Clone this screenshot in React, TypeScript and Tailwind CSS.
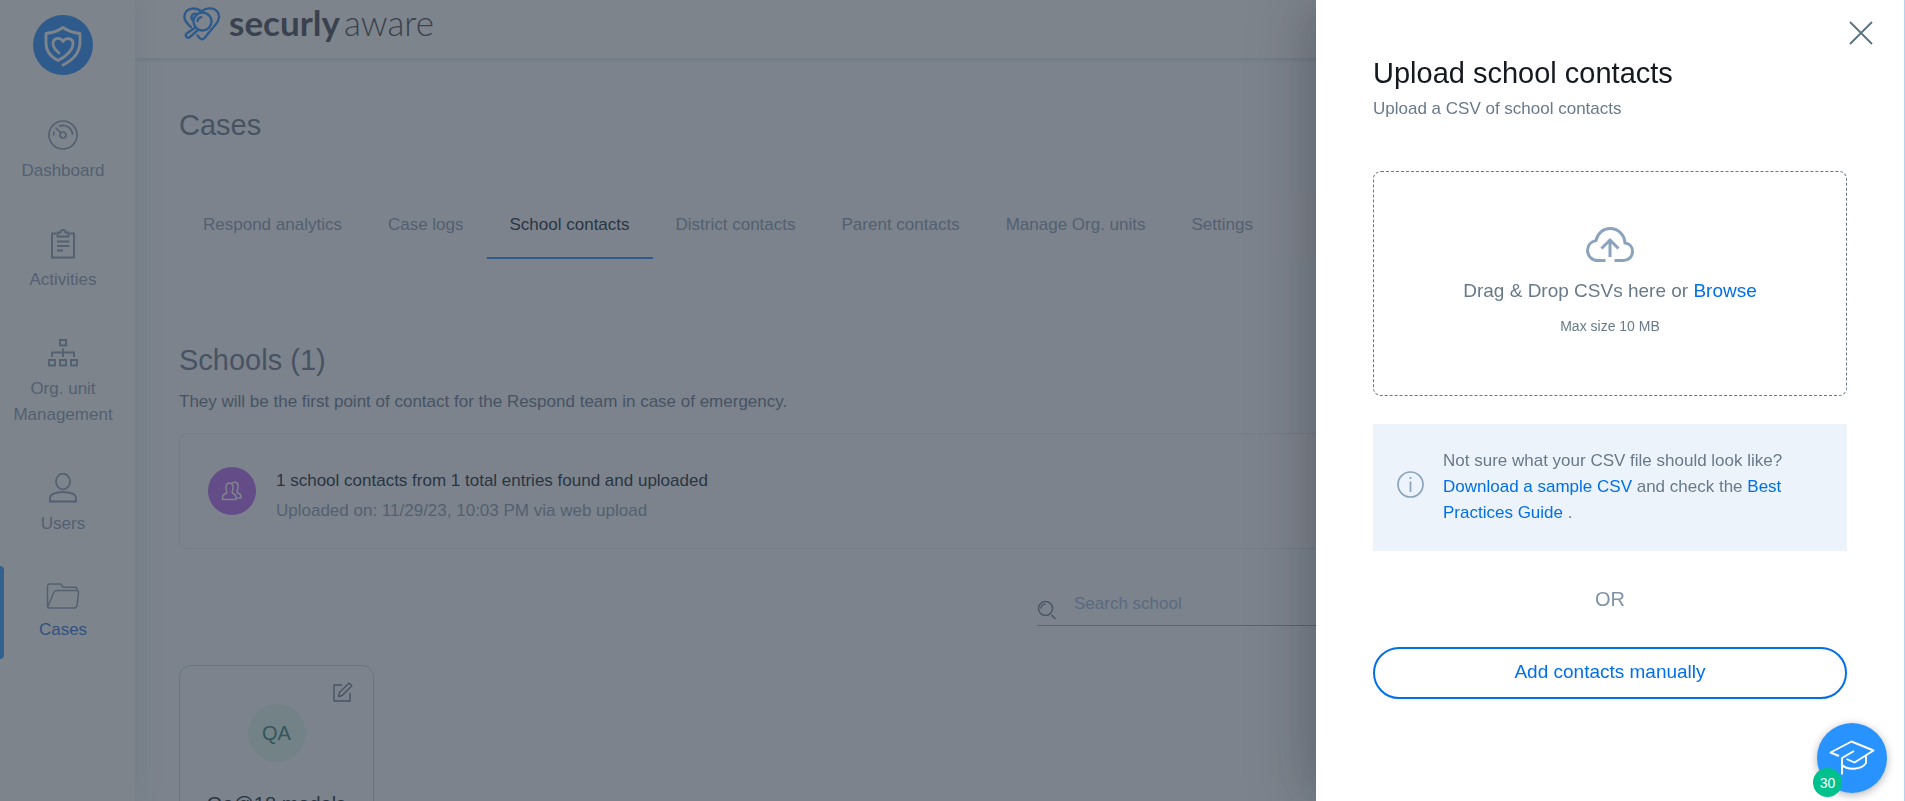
import type { ReactNode } from "react";

const DashboardIcon = () => (
  <svg width="30" height="30" viewBox="0 0 30 30" fill="none" stroke="currentColor" strokeWidth="1.700">
    <circle cx="15" cy="15" r="14" />
    <circle cx="15" cy="15" r="3" />
    <path d="M12.8 12.8 7.5 7.5M5.5 15.5c0-1.500.2-2.800.7-4M11 6.300a9.500 9.500 0 0 1 13.500 8.700M11.500 6.200c2-.8 4-.9 6-.4" />
  </svg>
);

const ActivitiesIcon = () => (
  <svg width="30" height="30" viewBox="0 0 30 30" fill="none" stroke="currentColor" strokeWidth="1.900">
    <path d="M8 4.500H4V28.500H26V4.500H22" />
    <path d="M9.500 7.500V3.500H12.500C12.500 0 17.500 0 17.500 3.500H20.500V7.500Z" />
    <path d="M9 12.500H21.500M9 17H21.500M9 21.500H15" />
  </svg>
);

const OrgUnitIcon = () => (
  <svg width="30" height="30" viewBox="0 0 30 30" fill="none" stroke="currentColor" strokeWidth="1.900">
    <path d="M12 2h6v5.500h-6zM1 22h6v5.500H1zM12 22h6v5.500h-6zM23 22h6v5.500h-6zM15 10.500V19M4 19v-4.500h22V19" />
  </svg>
);

const UsersIcon = () => (
  <svg width="30" height="30" viewBox="0 0 30 30" fill="none" stroke="currentColor" strokeWidth="1.800">
    <ellipse cx="15" cy="8.500" rx="7" ry="7.800" />
    <path d="M2 28.500V25c0-3.500 5-6 13-6s13 2.500 13 6v3.500z" />
  </svg>
);

const CasesIcon = () => (
  <svg width="34" height="27" viewBox="0 0 34 27" fill="none" stroke="currentColor" strokeWidth="1.500" strokeLinejoin="round">
    <path d="M31 8.500V7.500c0-1.500-.7-2.200-2-2.200H17L14.800 2H3.800C2.200 2 1.500 2.700 1.500 4.200V24.500c0 1 .7 1.500 1.800 1.500H28c1.800 0 2.600-.8 3-2.500l1.500-12.500c.2-1.500-.5-2.500-2-2.500H10.800c-1.500 0-2.500.6-3.200 2.200L2 24.500" />
  </svg>
);

const navItems = [
  { label: "Dashboard", icon: <DashboardIcon /> },
  { label: "Activities", icon: <ActivitiesIcon /> },
  { label: "Org. unit Management", icon: <OrgUnitIcon /> },
  { label: "Users", icon: <UsersIcon /> },
  { label: "Cases", icon: <CasesIcon />, active: true },
];

const tabs = [
  "Respond analytics",
  "Case logs",
  "School contacts",
  "District contacts",
  "Parent contacts",
  "Manage Org. units",
  "Settings",
];

const NavItem = ({ label, icon, active }: { label: string; icon: ReactNode; active?: boolean }) => (
  <a
    href="#"
    className={`relative flex flex-col items-center gap-2 px-2 py-4 text-center leading-[26px] ${active ? "text-[#3c82e4]" : "text-[#93a5bd]"}`}
  >
    {active && <span className="absolute inset-y-0 left-0 w-1 rounded-r bg-[#3fa9ff]" />}
    <span className="text-[#93a5bd]">{icon}</span>
    {label}
  </a>
);

const Sidebar = () => (
  <aside className="relative z-10 w-[135px] shrink-0 bg-white pr-[9px] shadow-[4px_0_24px_rgba(60,90,120,0.1)]">
    <div className="flex justify-center pt-[15px]">
      <svg width="60" height="60" viewBox="0 0 60 60" fill="none" stroke="#fff" strokeWidth="2.800" strokeLinecap="round" strokeLinejoin="round">
        <circle cx="30" cy="30" r="30" fill="#3998ff" stroke="none" />
        <path d="M30 50c9-4.500 17-11.500 17-23v-8.500c-6-.5-12-2.500-17-6-5 3.500-11 5.500-17 6V28c0 8 5 14 12 17.500 6-3 15-9.500 15-17 0-5.500-7-6.500-10-2-3-5-10-3.500-10 2 0 4 3 7 6 9.500" />
      </svg>
    </div>
    <nav className="mt-[29px] flex flex-col gap-[13px]">
      {navItems.map((item) => (
        <NavItem key={item.label} {...item} />
      ))}
    </nav>
  </aside>
);

const Header = () => (
  <header className="relative flex h-[58px] items-start bg-white pl-12 pt-[3px] shadow-[0_1px_5px_rgba(40,60,90,0.18)]">
    <svg className="mt-1" width="38" height="34" viewBox="0 0 38 34" fill="none" stroke="#3998ff" strokeWidth="2.400" strokeLinecap="round" strokeLinejoin="round">
      {/* heart outline, open where the magnifier crosses it */}
      <path d="M8 20C3 16 1 12 1.500 8.500 2.500 1.500 12 -1 18.500 4.500 25 -1 35 1 36 9c.5 4.500-2.500 8-5.500 11L21.500 31c-1.500 1.500-3.500 1.500-5 0l-2-2.500" />
      <path d="M9.500 13C7 9.500 9.500 6 13 6.800" />
      <circle cx="19.500" cy="14.500" r="9" />
      <path d="M14.500 14c.4-2 1.800-3.400 3.700-3.800M12.500 20.500 3.500 26.500c-2 2.500 1 5.500 3.500 3.500l8.500-7.500" />
    </svg>
    <p className="ml-2 font-['Lato'] text-[35px] leading-[38px] text-[#565b68]">
      <span className="font-bold">securly</span>
      <span className="ml-1 font-light">aware</span>
    </p>
  </header>
);

const Tabs = () => (
  <div className="mt-[52px] flex h-[65px] bg-white/40 pl-px" role="tablist">
    {tabs.map((tab) => (
      <button
        key={tab}
        role="tab"
        aria-selected={tab === "School contacts"}
        className={`whitespace-nowrap border-b-2 px-[23px] pb-0.5 ${tab === "School contacts" ? "border-[#3998ff] text-[#2b3a4a]" : "border-transparent text-[#93a5bd]"}`}
      >
        {tab}
      </button>
    ))}
  </div>
);

const UploadSummary = () => (
  <div className="mt-[18px] flex h-[116px] items-center gap-5 rounded-lg border border-[#e6ebf2] bg-white/40 px-7">
    <span className="flex size-12 items-center justify-center rounded-full bg-[#bb74f2]">
      <svg width="22" height="20" viewBox="0 0 22 20" fill="none" stroke="#fff" strokeWidth="1.500" strokeLinejoin="round">
        <path d="M5.500 10C4.500 7 4.500 2 8.500 2s4 5 3 8c-.5 1-.5 2 .5 2.500 2 .8 3 1.500 3 3.500v2.500H1.500V16c0-2 1.500-2.700 3.500-3.500 1-.5 1-1.500.5-2.500z" />
        <path d="M11 2.500c1-1.800 5.500-2 6 1.500.3 2.500 0 4.500-1 6-.5 1 0 1.500 1 2 2 .7 3 1.500 3 3.500v1.500h-4" />
      </svg>
    </span>
    <div className="pt-2.5">
      <p className="leading-[30px] text-[#2b3a4a]">1 school contacts from 1 total entries found and uploaded</p>
      <p className="leading-[30px] text-[#93a5bd]">Uploaded on: 11/29/23, 10:03 PM via web upload</p>
    </div>
  </div>
);

const SchoolCard = () => (
  <article className="mt-[39px] w-[195px] rounded-xl border border-[#c0dafa] bg-white/40 pb-8">
    <div className="flex justify-end px-5 pt-4">
      <button aria-label="Edit school">
        <svg width="20" height="20" viewBox="0 0 20 20" fill="none" stroke="#76869a" strokeWidth="1.400" strokeLinejoin="round">
          <path d="M9 3H1V19H17V11" />
          <path d="M5.500 14.500 6.500 10.500 16 1l2.800 2.800L9.300 13.500z" />
        </svg>
      </button>
    </div>
    <div className="mx-auto mt-0.5 flex size-[58px] items-center justify-center rounded-full bg-[#e2faf2] text-xl text-[#3d9088]">QA</div>
    <h3 className="mt-7 text-center text-xl text-[#2b3a4a]">Qa@18 models</h3>
  </article>
);

const UploadDrawer = () => (
  <section
    role="dialog"
    aria-label="Upload school contacts"
    className="fixed inset-y-0 right-0 w-[589px] border-r border-[#b5d3ee] bg-white px-[57px] pt-14 shadow-[0_0_60px_rgba(20,24,30,0.35)]"
  >
    <button aria-label="Close" className="absolute right-[31px] top-[21px]">
      <svg width="24" height="24" viewBox="0 0 24 24" fill="none" stroke="#5c7080" strokeWidth="1.800">
        <path d="M1 1 23 23M23 1 1 23" />
      </svg>
    </button>
    <h2 className="text-[29px] leading-[34px] text-[#14181f]">Upload school contacts</h2>
    <p className="mt-1.5 leading-[26px] text-[#687a8a]">Upload a CSV of school contacts</p>

    <div className="mt-[49px] flex h-[225px] flex-col items-center rounded-lg border border-dashed border-[#64788a] pt-[55px]">
      <svg width="48" height="35" viewBox="0 0 48 35" fill="none" stroke="#8ba3bd" strokeWidth="3">
        <path d="M19.500 33.500H12C6 33.500 1.500 29 1.500 23.500c0-5 3.500-9 8.500-10C11.500 6.500 17 1.500 24 1.500c8 0 14.500 6 15 14.500 4.500.5 7.500 4 7.500 8.500 0 5-4 9-9 9H28.500" />
        <path d="M24 30V13.500M15.500 21.500 24 13l8.500 8.500" />
      </svg>
      <p className="mt-4 text-[19px] leading-[26px] text-[#687a8a]">
        Drag &amp; Drop CSVs here or <label htmlFor="csv" className="cursor-pointer text-[#0070ea]">Browse</label>
      </p>
      <input id="csv" type="file" accept=".csv" className="sr-only" />
      <p className="mt-3 text-sm leading-5 text-[#687a8a]">Max size 10 MB</p>
    </div>

    <div className="mt-7 flex h-[127px] items-start gap-[19px] bg-[#ecf3fb] py-6 pl-6 pr-12">
      <svg className="mt-[23px] shrink-0" width="27" height="27" viewBox="0 0 27 27" fill="none" stroke="#8ba3bd" strokeWidth="1.700">
        <circle cx="13.500" cy="13.500" r="12.500" />
        <path d="M13.500 10.500V21M13.500 6v2" />
      </svg>
      <p className="leading-[26px] text-[#687a8a]">
        Not sure what your CSV file should look like?{" "}
        <a href="#" className="text-[#0070ea]">Download a sample CSV</a> and check the{" "}
        <a href="#" className="text-[#0070ea]">Best Practices Guide</a> .
      </p>
    </div>

    <p className="mt-[34px] text-center text-xl text-[#8193a8]">OR</p>
    <button className="mt-[34px] h-[52px] w-full rounded-full border-2 border-[#0070ea] pb-0.5 text-[19px] text-[#0070ea]">
      Add contacts manually
    </button>
  </section>
);

const HelpButton = () => (
  <button
    aria-label="Learning center, 30 new"
    className="fixed bottom-2 right-[18px] flex size-[70px] items-center justify-center rounded-full bg-[#2893ff] shadow-[0_2px_8px_rgba(0,0,0,0.3)]"
  >
    <svg width="46" height="36" viewBox="0 0 46 36" fill="none" stroke="#fff" strokeWidth="1.900" strokeLinejoin="round">
      <path d="M10 16 1.500 12.500 22.500 1.500 44.500 10.500 25.500 22.500 17.500 19" />
      <path d="M25 11 13 18V34.500M13 25c5 5 19 5.500 24-2v-7" />
    </svg>
    <span className="absolute -bottom-1 -left-1 flex size-[29px] items-center justify-center rounded-full bg-[#00c08b] text-sm text-white">
      30
    </span>
  </button>
);

const App = () => {
  return (
    <div className="flex h-screen overflow-hidden bg-[#f9fcfe] font-['Liberation_Sans',sans-serif] text-[17px]">
      <Sidebar />
      <div className="min-w-0 flex-1">
        <Header />
        <main className="pb-10 pl-11 pr-11">
          <h1 className="pt-[50px] text-[29px] leading-[34px] text-[#75869a]">Cases</h1>
          <Tabs />
          <h2 className="mt-[84px] text-[29px] leading-[34px] text-[#75869a]">Schools (1)</h2>
          <p className="mt-3 leading-[26px] text-[#75869a]">
            They will be the first point of contact for the Respond team in case of emergency.
          </p>
          <UploadSummary />
          <div className="mt-[34px] flex justify-end">
            <label className="flex h-[43px] w-[824px] items-center gap-[17px] border-b border-[#8ab4e8]">
              <svg className="mt-3" width="20" height="20" viewBox="0 0 20 20" fill="none" stroke="#7c8ea4" strokeWidth="1.500">
                <circle cx="8.500" cy="8.500" r="7" />
                <path d="M14.500 15 18.500 19M4 8.500A4.500 4.500 0 0 1 8.500 4" />
              </svg>
              <input type="text" aria-label="Search school" placeholder="Search school" className="flex-1 outline-none placeholder:text-[#a4bede]" />
            </label>
          </div>
          <SchoolCard />
        </main>
      </div>

      <div className="fixed inset-0 z-20 bg-[rgba(40,50,64,0.6)]" />
      <div className="relative z-30">
        <UploadDrawer />
        <HelpButton />
      </div>
    </div>
  );
};

export default App;
